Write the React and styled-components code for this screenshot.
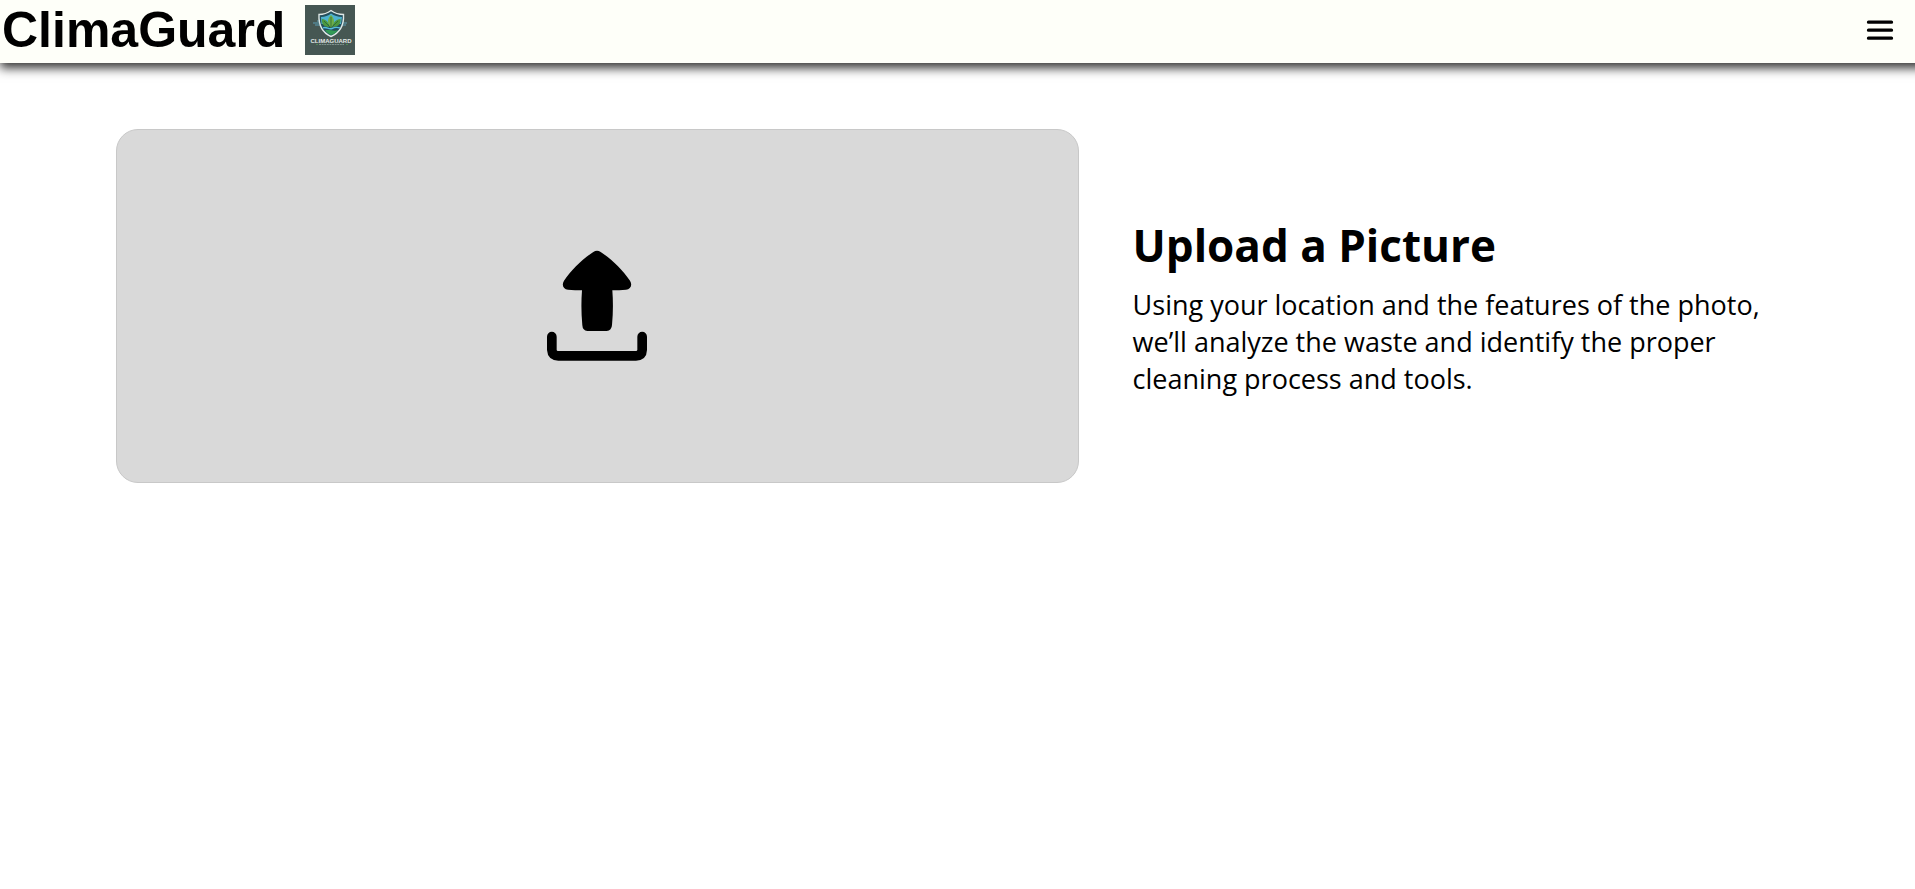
import React from "react";
import styled, { createGlobalStyle } from "styled-components";

const GlobalStyle = createGlobalStyle`
  *, *::before, *::after { box-sizing: border-box; }
  body {
    margin: 0;
    background: #fff;
    color: #000;
    font-family: "Open Sans", "Noto Sans", sans-serif;
  }
`;

const Header = styled.header`
  display: flex;
  align-items: center;
  height: 63px;
  padding: 0 20px 4px 2px;
  background: #fefff9;
  box-shadow: 5px 0 10px 5px #333;
`;

const Brand = styled.a`
  display: flex;
  align-items: center;
  gap: 20px;
  color: inherit;
  text-decoration: none;
`;

const BrandName = styled.span`
  font: bold 50px/58px "Liberation Sans", Arial, sans-serif;
`;

const BrandLogo = styled.svg`
  display: block;
  width: 50px;
  height: 50px;
`;

const MenuButton = styled.button`
  display: flex;
  margin: 0 0 0 auto;
  padding: 0;
  border: 0;
  background: none;
  color: inherit;
  cursor: pointer;
`;

const MenuIcon = styled.svg`
  width: 30px;
  height: 30px;
`;

const Main = styled.main`
  display: grid;
  grid-template-columns: 13fr 9fr;
  align-items: center;
  gap: 54px;
  padding: 66px 116px;
`;

const UploadButton = styled.button`
  display: flex;
  align-items: center;
  justify-content: center;
  height: 354px;
  padding: 0;
  border: 1px solid #c8c8c8;
  border-radius: 22px;
  background: #d9d9d9;
  color: #000;
  cursor: pointer;
`;

const UploadIcon = styled.svg`
  width: 100px;
  height: 112px;
`;

const Title = styled.h1`
  margin: 0 0 11px;
  font-size: 44px;
  line-height: 60px;
  font-weight: 700;
`;

const Description = styled.p`
  margin: 0;
  font-size: 27px;
  line-height: 37px;
`;

function Logo() {
  return (
    <BrandLogo viewBox="0 0 50 50" role="img" aria-label="ClimaGuard logo">
      <rect width="50" height="50" fill="#465753" />
      <path d="M8 18h8M10 20h8M12 16h4M34 18h8M33 20h8M35 16h4" stroke="#5b9db5" strokeWidth="1.2" />
      <path d="M26 5.500C22 8.500 18 9.500 14 9.500C13.500 19 16 27 26 31.500C36.500 27 39 19 38.500 9.500C34.500 9.500 30 8.500 26 5.500Z" fill="#234f5d" stroke="#dfe8e6" strokeWidth="1.4" />
      <path d="M16 12C20 12 23.500 10.500 26 8.500C29 10.500 33 12 37 12L36 19H16.500Z" fill="#4eb2cf" />
      <path d="M26 10C22 14 22 19 26 23C30 19 30 14 26 10Z" fill="#6fae45" />
      <path d="M24 22C18 22 16.500 18 17 14C21 14.500 24 17 24 22ZM28 22C34 22 36 18 35.500 14C31 14.500 28 17 28 22Z" fill="#4d983e" />
      <path d="M26 12V23M19 16L24 21M33 16L28 21" stroke="#205d38" strokeWidth=".7" fill="none" />
      <path d="M18 23C21 21 24 25 27 23.500C30 22 32 22 35 23" fill="none" stroke="#55bddc" strokeWidth="1.400" />
      <path d="M20 25.500C24 24 29 27 33 25C31 28 29 29 26 30C24 29 22 28 20 25.500Z" fill="#329b55" />
      <text x="26" y="37.500" textAnchor="middle" fill="#e3e9e7" fontFamily="Liberation Sans, sans-serif" fontWeight="bold" fontSize="6">CLIMAGUARD</text>
      <path d="M14 39.500h25" stroke="#7f918d" strokeWidth="1" strokeDasharray="2 .6" />
      <path d="M11 39.500h2M41 39.500h2" stroke="#4e8a54" strokeWidth="1" />
    </BrandLogo>
  );
}

export default function App() {
  return (
    <>
      <GlobalStyle />
      <Header>
        <Brand href="#">
          <BrandName>ClimaGuard</BrandName>
          <Logo />
        </Brand>
        <MenuButton type="button" aria-label="Open menu">
          <MenuIcon viewBox="0 0 30 30" aria-hidden="true">
            <path d="M3.500 7.200h23M3.500 15.200h23M3.500 23.200h23" stroke="currentColor" strokeWidth="3.300" strokeLinecap="round" />
          </MenuIcon>
        </MenuButton>
      </Header>
      <Main>
        <UploadButton type="button" aria-label="Upload a picture">
          <UploadIcon viewBox="0 2 300 336" aria-hidden="true">
            <path
              fill="currentColor"
              d="M139 8Q150 1 161 8C195 30 226 61 249 94C257 107 251 120 237 121Q217 123 196 123Q200 175 195 227Q194 244 179 245H121Q107 244 106 228Q101 175 105 123Q84 123 63 121C49 120 43 107 51 94C74 61 105 30 139 8Z"
            />
            <path
              fill="currentColor"
              d="M0 262A14 14 0 0 1 29 262V301Q29 305 33 305H267Q271 305 271 301V262A14 14 0 0 1 300 262V302Q299 333 267 334H34Q2 333 0 302Z"
            />
          </UploadIcon>
        </UploadButton>
        <section>
          <Title>Upload a Picture</Title>
          <Description>
            Using your location and the features of the photo, we’ll analyze the waste and identify
            the proper cleaning process and tools.
          </Description>
        </section>
      </Main>
    </>
  );
}
